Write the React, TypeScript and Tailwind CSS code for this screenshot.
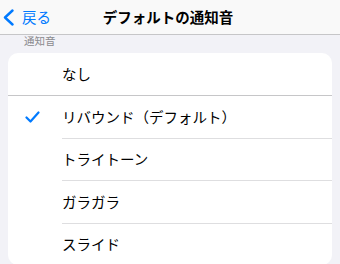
import React from 'react';

const items = ['なし', 'リバウンド（デフォルト）', 'トライトーン', 'ガラガラ', 'スライド'];
const selected = 1;

const Check = () => (
  <svg width="15" height="12" viewBox="0 0 15 12" fill="none">
    <path d="M1.5 6.5 L5.5 10.5 L13.5 1.5" stroke="#007aff" strokeWidth="2.2" strokeLinecap="round" strokeLinejoin="round" />
  </svg>
);

export default function App() {
  return (
    <div
      className="w-[340px] h-[264px] overflow-hidden bg-[#f2f2f7] text-black"
      style={{ fontFamily: '"Noto Sans CJK JP", "Noto Sans", sans-serif' }}
    >
      {/* Nav bar */}
      <div className="h-[35px] bg-[#f9f9f9] border-b border-[#c6c6c8] grid grid-cols-[1fr_auto_1fr] items-center">
        <div className="flex items-center pl-[3px] gap-[8px] text-[#007aff]">
          <svg width="11" height="17" viewBox="0 0 11 17" fill="none">
            <path d="M9.5 1.5 L2 8.5 L9.5 15.5" stroke="#007aff" strokeWidth="2.4" strokeLinecap="round" strokeLinejoin="round" />
          </svg>
          <span className="text-[14.5px] leading-none">戻る</span>
        </div>
        <div className="text-[14.5px] font-semibold leading-none -translate-x-[2px]">デフォルトの通知音</div>
        <div />
      </div>

      {/* Section header */}
      <div className="h-[18px] pl-[24px] text-[10.5px] leading-[12px] text-[#8a8a8e] pt-[0px]">通知音</div>

      {/* List */}
      <div className="mx-2 rounded-[10px] bg-white">
        {items.map((label, i) => (
          <div key={label}>
            <div className={`${i === 0 ? 'h-[42px]' : 'h-[41.5px]'} flex items-center`}>
              <div className="w-[54px] flex justify-center pl-[2px] pr-[8px]">
                {i === selected && <Check />}
              </div>
              <span className="text-[14.5px] leading-none">{label}</span>
            </div>
            {i === 0 && <div className="h-px bg-[#c6c6c8]" />}
            {i > 0 && i < items.length - 1 && <div className="h-px bg-[#dedee0] ml-[54px]" />}
          </div>
        ))}
      </div>
    </div>
  );
}
